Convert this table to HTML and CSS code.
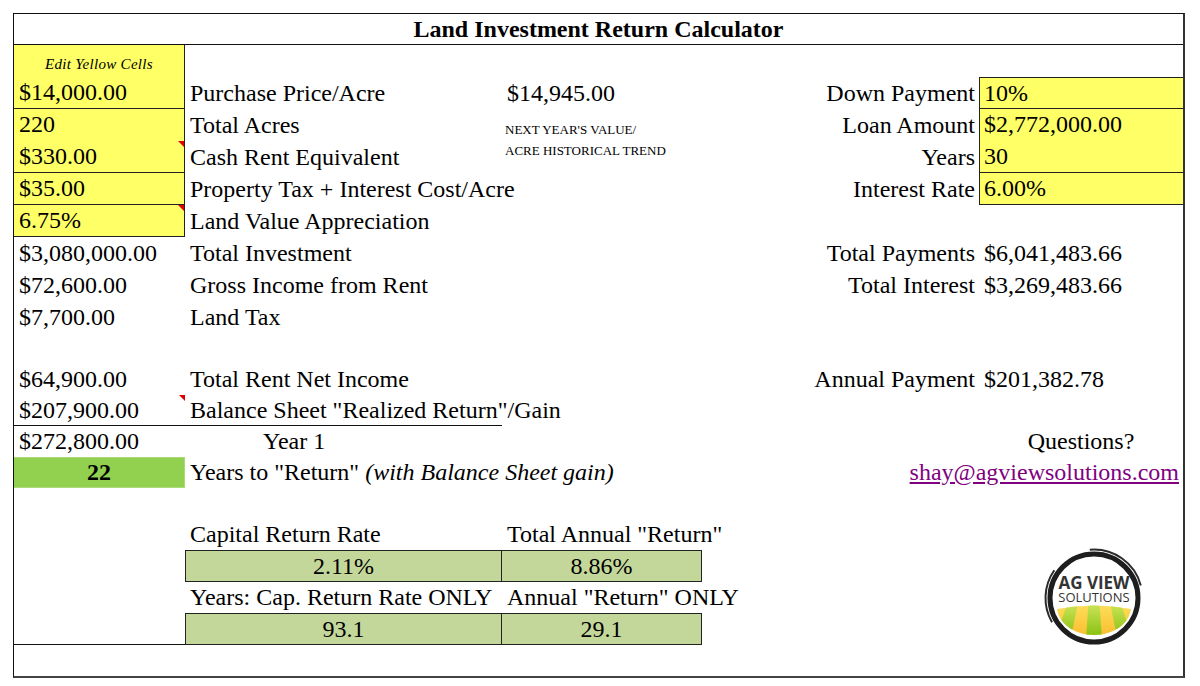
FILE: index.html
```html
<!DOCTYPE html>
<html>
<head>
<meta charset="utf-8">
<title>Land Investment Return Calculator</title>
<link rel="stylesheet" href="styles.css">
</head>
<body>
<div class="sheet">
  <div class="title">Land Investment Return Calculator</div>

  <div class="row">
    <div class="c ya edit">Edit Yellow Cells</div>
    <div class="c"></div><div class="c"></div><div class="c"></div><div class="c"></div>
  </div>
  <div class="row">
    <div class="c ya">$14,000.00</div>
    <div class="c">Purchase Price/Acre</div>
    <div class="c">$14,945.00</div>
    <div class="c lbl">Down Payment</div>
    <div class="c ye first">10%</div>
  </div>
  <div class="row">
    <div class="c ya">220</div>
    <div class="c">Total Acres</div>
    <div class="c trend">NEXT YEAR'S VALUE/<br>ACRE HISTORICAL TREND</div>
    <div class="c lbl">Loan Amount</div>
    <div class="c ye">$2,772,000.00</div>
  </div>
  <div class="row">
    <div class="c ya note">$330.00</div>
    <div class="c">Cash Rent Equivalent</div>
    <div class="c"></div>
    <div class="c lbl">Years</div>
    <div class="c ye">30</div>
  </div>
  <div class="row">
    <div class="c ya">$35.00</div>
    <div class="c">Property Tax + Interest Cost/Acre</div>
    <div class="c"></div>
    <div class="c lbl">Interest Rate</div>
    <div class="c ye">6.00%</div>
  </div>
  <div class="row">
    <div class="c ya note">6.75%</div>
    <div class="c">Land Value Appreciation</div>
    <div class="c"></div><div class="c"></div><div class="c"></div>
  </div>
  <div class="row">
    <div class="c">$3,080,000.00</div>
    <div class="c">Total Investment</div>
    <div class="c"></div>
    <div class="c lbl">Total Payments</div>
    <div class="c">$6,041,483.66</div>
  </div>
  <div class="row">
    <div class="c">$72,600.00</div>
    <div class="c">Gross Income from Rent</div>
    <div class="c"></div>
    <div class="c lbl">Total Interest</div>
    <div class="c">$3,269,483.66</div>
  </div>
  <div class="row">
    <div class="c">$7,700.00</div>
    <div class="c">Land Tax</div>
    <div class="c"></div><div class="c"></div><div class="c"></div>
  </div>
  <div class="row short"></div>
  <div class="row short">
    <div class="c">$64,900.00</div>
    <div class="c">Total Rent Net Income</div>
    <div class="c"></div>
    <div class="c lbl">Annual Payment</div>
    <div class="c">$201,382.78</div>
  </div>
  <div class="row short">
    <div class="c note ul">$207,900.00</div>
    <div class="c ul">Balance Sheet "Realized Return"/Gain</div>
    <div class="c"></div><div class="c"></div><div class="c"></div>
  </div>
  <div class="row short">
    <div class="c">$272,800.00</div>
    <div class="c year">Year 1</div>
    <div class="c"></div>
    <div class="c"></div>
    <div class="c center">Questions?</div>
  </div>
  <div class="row short">
    <div class="c green">22</div>
    <div class="c">Years to "Return" <i>(with Balance Sheet gain)</i></div>
    <div class="c"></div>
    <div class="c email"><a href="#">shay@agviewsolutions.com</a></div>
  </div>
  <div class="row short"></div>
  <div class="row short">
    <div class="c"></div>
    <div class="c">Capital Return Rate</div>
    <div class="c">Total Annual "Return"</div>
  </div>
  <div class="row">
    <div class="c"></div>
    <div class="c gb">2.11%</div>
    <div class="c gb gc">8.86%</div>
  </div>
  <div class="row short">
    <div class="c"></div>
    <div class="c">Years: Cap. Return Rate ONLY</div>
    <div class="c">Annual "Return" ONLY</div>
  </div>
  <div class="row">
    <div class="c bb"></div>
    <div class="c gb">93.1</div>
    <div class="c gb gc">29.1</div>
  </div>
  <div class="row short"></div>

  <div class="logo">
    <svg viewBox="0 0 110 110" width="110" height="110">
      <defs>
        <clipPath id="dome"><path d="M17,64 Q54,57 91,64 C89,79 73,90 54,90 C35,90 19,79 17,64 Z"/></clipPath>
        <linearGradient id="yl" x1="0" y1="0" x2="0" y2="1">
          <stop offset="0" stop-color="#ffe866"/>
          <stop offset="1" stop-color="#f8b424"/>
        </linearGradient>
        <linearGradient id="gr" x1="0" y1="0" x2="0" y2="1">
          <stop offset="0" stop-color="#cde55a"/>
          <stop offset="1" stop-color="#88c010"/>
        </linearGradient>
      </defs>
      <circle cx="54" cy="53" r="44" fill="#fff" stroke="#1e1e1e" stroke-width="5"/>
      <path d="M49.8,4.7 A48.5,48.5 0 0 1 100.8,40.4" fill="none" stroke="#2a2a2a" stroke-width="2"/>
      <path d="M12,77.3 A48.5,48.5 0 0 1 14.3,25.2" fill="none" stroke="#2a2a2a" stroke-width="2"/>
      <g clip-path="url(#dome)">
        <rect x="0" y="50" width="110" height="50" fill="url(#yl)"/>
        <polygon points="27.5,58 38,58 31,92 15.9,92" fill="url(#gr)"/>
        <polygon points="48.5,58 59.5,58 61.9,92 46.1,92" fill="url(#gr)"/>
        <polygon points="70,58 80.5,58 92.1,92 77,92" fill="url(#gr)"/>
      </g>
    </svg>
    <div class="logo-text">
      <span class="lg1">AG VIEW</span>
      <span class="lg2">SOLUTIONS</span>
    </div>
  </div>
</div>
</body>
</html>
```

FILE: styles.css
```css
body {
  margin: 0;
  background: #fff;
  color: #000;
  font-family: "Liberation Serif", "Times New Roman", serif;
}

.sheet {
  position: relative;
  margin: 13px 0 0 13px;
  width: 1172px;
  box-sizing: border-box;
  border: 1px solid #111;
  border-right: 2px solid #333;
  border-bottom: 2px solid #444;
}

.title {
  height: 31px;
  box-sizing: border-box;
  border-bottom: 1px solid #111;
  text-align: center;
  font-weight: bold;
  font-size: 24px;
  line-height: 30px;
}

.row {
  display: grid;
  grid-template-columns: 171px 317px 200px 277px 204px;
  height: 32px;
  font-size: 24px;
  line-height: 32px;
}

.row.short {
  height: 31px;
  line-height: 31px;
}

.c {
  position: relative;
  box-sizing: border-box;
  white-space: nowrap;
  padding-left: 5px;
  min-width: 0;
}

.ya {
  background: #ffff66;
  border-right: 1px solid #222;
  border-bottom: 1px solid #222;
  line-height: 31px;
}

.ye {
  background: #ffff66;
  border-left: 1px solid #222;
  border-bottom: 1px solid #222;
  padding-left: 4px;
  line-height: 31px;
}

.ye.first {
  border-top: 1px solid #222;
  line-height: 30px;
}

.edit {
  font-style: italic;
  font-size: 15px;
  text-align: center;
  padding-left: 0;
  line-height: 38px;
  letter-spacing: 0.3px;
}

.lbl {
  text-align: right;
  padding-left: 0;
  padding-right: 4px;
}

.trend {
  font-size: 13px;
  line-height: 21px;
  padding-top: 10px;
  padding-left: 3px;
}

.note::after {
  content: "";
  position: absolute;
  top: 0;
  right: 0;
  border-style: solid;
  border-width: 0 6px 6px 0;
  border-color: transparent #e00000 transparent transparent;
}

.ul {
  border-bottom: 1px solid #111;
  line-height: 30px;
}

.year {
  padding-left: 78px;
}

.center {
  text-align: center;
  padding-left: 0;
}

.green {
  background: #92d050;
  border: 1px solid #a9dc79;
  border-left: none;
  text-align: center;
  font-weight: bold;
  padding-left: 0;
  line-height: 29px;
}

.email {
  grid-column: 4 / span 2;
  text-align: right;
  padding-right: 4px;
}

.email a {
  color: #800080;
  text-decoration: underline;
}

.gb {
  background: #c4d79b;
  border: 1px solid #222;
  text-align: center;
  padding-left: 0;
  line-height: 30px;
}

.gc {
  border-left: none;
}

.bb {
  border-bottom: 1px solid #111;
}

.logo {
  position: absolute;
  left: 1026px;
  top: 531px;
  width: 110px;
  height: 110px;
}

.logo svg {
  display: block;
}

.logo-text {
  position: absolute;
  left: 0;
  top: 31px;
  width: 108px;
  text-align: center;
  font-family: "Open Sans", "Liberation Sans", sans-serif;
  color: #333;
}

.lg1 {
  display: block;
  font-weight: bold;
  font-size: 17px;
  line-height: 14px;
  height: 14px;
}

.lg2 {
  display: block;
  font-size: 13px;
  line-height: 14px;
  height: 14px;
}
```
